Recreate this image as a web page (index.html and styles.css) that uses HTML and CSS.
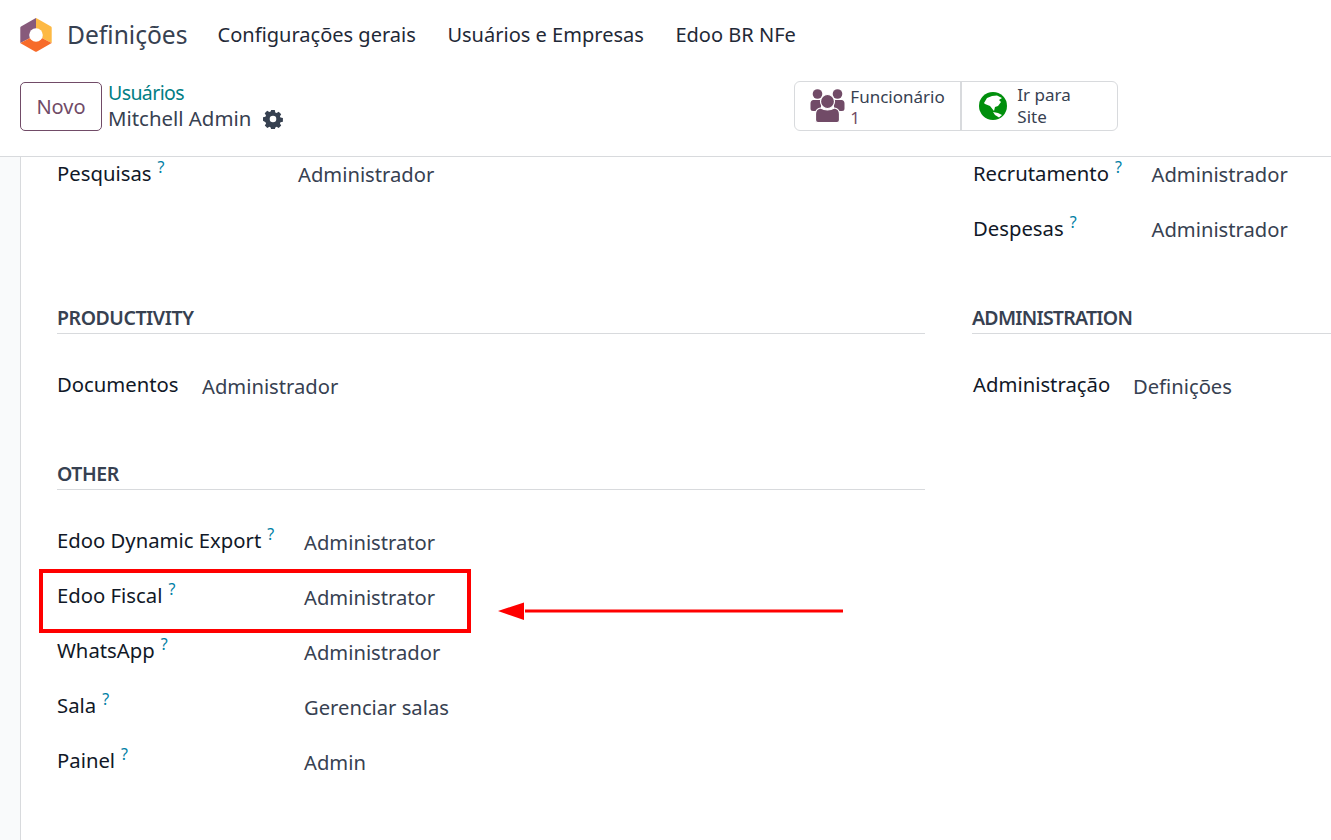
FILE: index.html
```html
<!DOCTYPE html>
<html lang="pt-BR">
<head>
<meta charset="utf-8">
<title>Definições</title>
<link rel="stylesheet" href="styles.css">
</head>
<body>
<header class="topbar">
  <svg class="logo" viewBox="0 0 32 34" width="32" height="34">
    <path d="M15 .6 1 8.500Q.3 9 .3 9.800V25L16 17V0Q15.500.3 15 .6Z" fill="#875a7b"/>
    <path d="M17 .6 31 8.500Q31.700 9 31.700 9.800V25L16 17V0Q16.500.3 17 .6Z" fill="#fdb944"/>
    <path d="M.3 25 16 17 31.700 25 17 33.400Q16 34 15 33.400L1 25.400Z" fill="#f76b2a"/>
    <circle cx="16" cy="17" r="6.800" fill="#fff"/>
  </svg>
  <span class="app-name">Definições</span>
  <nav class="menu">
    <a>Configurações gerais</a>
    <a>Usuários e Empresas</a>
    <a>Edoo BR NFe</a>
  </nav>
</header>
<section class="control">
  <button class="btn-new">Novo</button>
  <div class="crumbs">
    <a class="crumb-link">Usuários</a>
    <div class="crumb-current">Mitchell Admin
      <svg class="gear" viewBox="0 0 20 20" width="20" height="20"><path fill="#374151" fill-rule="evenodd" d="M8.200 1h3.600l.5 2.400 1.300.6 2.100-1.300 2.500 2.500-1.300 2.100.6 1.300 2.400.5v3.600l-2.400.5-.6 1.300 1.300 2.100-2.500 2.500-2.100-1.300-1.300.6-.5 2.400H8.200l-.5-2.400-1.300-.6-2.100 1.300-2.500-2.500 1.300-2.100-.6-1.300L0 11.800V8.200l2.400-.5.6-1.300-1.300-2.100 2.500-2.500 2.100 1.300 1.300-.6ZM10 6.700a3.300 3.300 0 1 0 0 6.600 3.300 3.300 0 0 0 0-6.600Z"/></svg>
    </div>
  </div>
  <div class="stats">
    <div class="stat stat-emp">
      <svg class="stat-icon" viewBox="0 0 35 34" width="35" height="34"><g fill="#714b67"><circle cx="7.500" cy="5" r="4.800"/><circle cx="27.500" cy="5" r="4.800"/><path d="M3 11H11V22H3Q.5 22 .5 19.500V14.500Q.5 11.500 3 11ZM32 11H24V22H32Q34.500 22 34.500 19.500V14.500Q34.500 11.500 32 11Z"/><g stroke="#fff" stroke-width="1.200"><circle cx="17.500" cy="12.500" r="7"/><path d="M10.500 19Q17.500 23 24.500 19 29.500 20 29.500 25V31Q29.500 33.600 27 33.600H8Q5.500 33.600 5.500 31V25Q5.500 20 10.500 19Z"/></g></g></svg>
      <div class="stat-text"><span>Funcionário</span><span class="stat-num">1</span></div>
    </div>
    <div class="stat stat-site">
      <svg class="stat-icon" viewBox="0 0 28 28" width="28" height="28"><circle cx="14" cy="14" r="14" fill="#008f0c"/><path fill="#fff" d="M5 11 8 6 13 4 18 3.500 23 6 20 8 22 10 19 14 16 15 15 19 11 14 6 12Z"/><path fill="#fff" d="M14 20 19 21 23 23 20 25.500 16 23Z"/></svg>
      <div class="stat-text"><span>Ir para</span><span>Site</span></div>
    </div>
  </div>
</section>
<div class="body-wrap">
  <aside class="gutter"></aside>
  <main class="sheet">
    <div class="columns">
      <div class="col-left">
        <div class="rows rows-a">
          <div class="row"><span class="lbl">Pesquisas<sup>?</sup></span><span class="val">Administrador</span></div>
        </div>
        <h3 class="title title-productivity">PRODUCTIVITY</h3>
        <div class="rows rows-b">
          <div class="row"><span class="lbl">Documentos</span><span class="val">Administrador</span></div>
        </div>
        <h3 class="title title-other">OTHER</h3>
        <div class="rows rows-c">
          <div class="row"><span class="lbl">Edoo Dynamic Export<sup>?</sup></span><span class="val">Administrator</span></div>
          <div class="row"><span class="lbl">Edoo Fiscal<sup>?</sup></span><span class="val">Administrator</span></div>
          <div class="row"><span class="lbl">WhatsApp<sup>?</sup></span><span class="val">Administrador</span></div>
          <div class="row"><span class="lbl">Sala<sup>?</sup></span><span class="val">Gerenciar salas</span></div>
          <div class="row"><span class="lbl">Painel<sup>?</sup></span><span class="val">Admin</span></div>
        </div>
      </div>
      <div class="col-right">
        <div class="rows rows-d">
          <div class="row"><span class="lbl">Recrutamento<sup>?</sup></span><span class="val">Administrador</span></div>
          <div class="row"><span class="lbl">Despesas<sup>?</sup></span><span class="val">Administrador</span></div>
        </div>
        <h3 class="title title-admin">ADMINISTRATION</h3>
        <div class="rows rows-e">
          <div class="row"><span class="lbl">Administração</span><span class="val">Definições</span></div>
        </div>
      </div>
    </div>
    <div class="highlight-box"></div>
    <svg class="arrow" viewBox="0 0 346 20" width="346" height="20"><path d="M27 7.500H345V10.500H27Z" fill="#f00"/><path d="M0 9 26 .5V18Z" fill="#f00"/></svg>
  </main>
</div>
</body>
</html>
```
FILE: styles.css
```css
* { box-sizing: border-box; }
html, body { margin: 0; height: 100%; }
body {
  width: 1331px;
  height: 840px;
  overflow: hidden;
  background: #fff;
  font-family: "Noto Sans", sans-serif;
  font-size: 20px;
  line-height: 27px;
  color: #374151;
}
.topbar {
  height: 68px;
  display: flex;
  align-items: center;
  padding-left: 20px;
}
.logo { flex: none; margin-top: 1px; }
.app-name {
  margin-left: 15px;
  font-size: 24.600px;
  color: #374151;
}
.menu { display: flex; margin-left: 30px; gap: 31.500px; }
.menu a { color: #1f2937; font-size: 20.050px; }
.control {
  height: 89px;
  border-bottom: 1px solid #d8dadd;
  position: relative;
  display: flex;
  padding: 14px 0 0 20px;
}
.btn-new {
  width: 82px;
  height: 49px;
  padding: 0;
  background: #fff;
  border: 1px solid #714b67;
  border-radius: 5px;
  color: #714b67;
  font: inherit;
  font-size: 20px;
}
.crumbs { margin-left: 6px; line-height: 25px; margin-top: -2px; }
.crumb-link { color: #017e84; display: block; font-size: 19.500px; letter-spacing: -0.600px; }
.crumb-current { display: flex; align-items: center; gap: 12px; font-size: 20.400px; margin-top: 1px; }
.stats {
  display: flex;
  margin-left: 511px;
  margin-top: -1px;
  width: 324px;
  height: 50px;
  border: 1px solid #d8dadd;
  border-radius: 6px;
}
.stat { display: flex; align-items: center; }
.stat-emp { width: 167px; padding-left: 15px; gap: 5px; border-right: 2px solid #d8dadd; }
.stat-site { padding-left: 17px; gap: 10px; }
.stat-text {
  display: flex;
  flex-direction: column;
  font-size: 17px;
  line-height: 22px;
  color: #374151;
}
.stat-emp .stat-text { line-height: 21px; margin-top: 2px; }
.stat-num { color: #714b67; }
.body-wrap { display: flex; height: 683px; overflow: hidden; }
.gutter {
  width: 21px;
  background: #f9fafb;
  border-right: 1px solid #d8dadd;
  flex: none;
}
.sheet { position: relative; flex: 1; padding-left: 36px; overflow: hidden; }
.columns { display: flex; width: 1400px; }
.col-left { width: 868px; }
.col-right { width: 400px; margin-left: 47px; }
.rows { display: flex; flex-direction: column; }
.row { display: flex; height: 55px; }
.lbl { color: #111827; font-weight: 400; font-size: 20.300px; flex: none; }
.val { flex: none; padding-top: 1px; font-size: 20.200px; }
sup { color: #0180a5; font-size: 16px; margin-left: 6px; vertical-align: 8px; line-height: 0; font-weight: 400; }
.rows-a .lbl { width: 241px; }
.rows-b .lbl { width: 145px; }
.rows-c .lbl { width: 247px; }
.rows-d .lbl { width: 178.500px; }
.rows-e .lbl { width: 160px; }
.rows-a { padding-top: 3px; height: 110px; margin-bottom: 36px; }
.rows-b .val, .rows-c .val, .rows-e .val { padding-top: 2px; }
.title {
  margin: 0;
  height: 31px;
  padding-top: 1px;
  font-size: 19.500px;
  font-weight: 600;
  color: #374151;
  border-bottom: 1px solid #d8dadd;
  letter-spacing: -0.450px;
}
.title-admin { letter-spacing: -0.750px; }
.rows-b { padding-top: 37px; height: 125px; }
.rows-c { padding-top: 37px; }
.rows-d { padding-top: 3px; height: 146px; padding-left: 1px; }
.rows-e { padding-top: 37px; padding-left: 1px; }
.highlight-box {
  position: absolute;
  left: 18px;
  top: 412px;
  width: 432px;
  height: 64px;
  border: 4px solid #f00;
}
.arrow { position: absolute; left: 477px; top: 445px; }
```
